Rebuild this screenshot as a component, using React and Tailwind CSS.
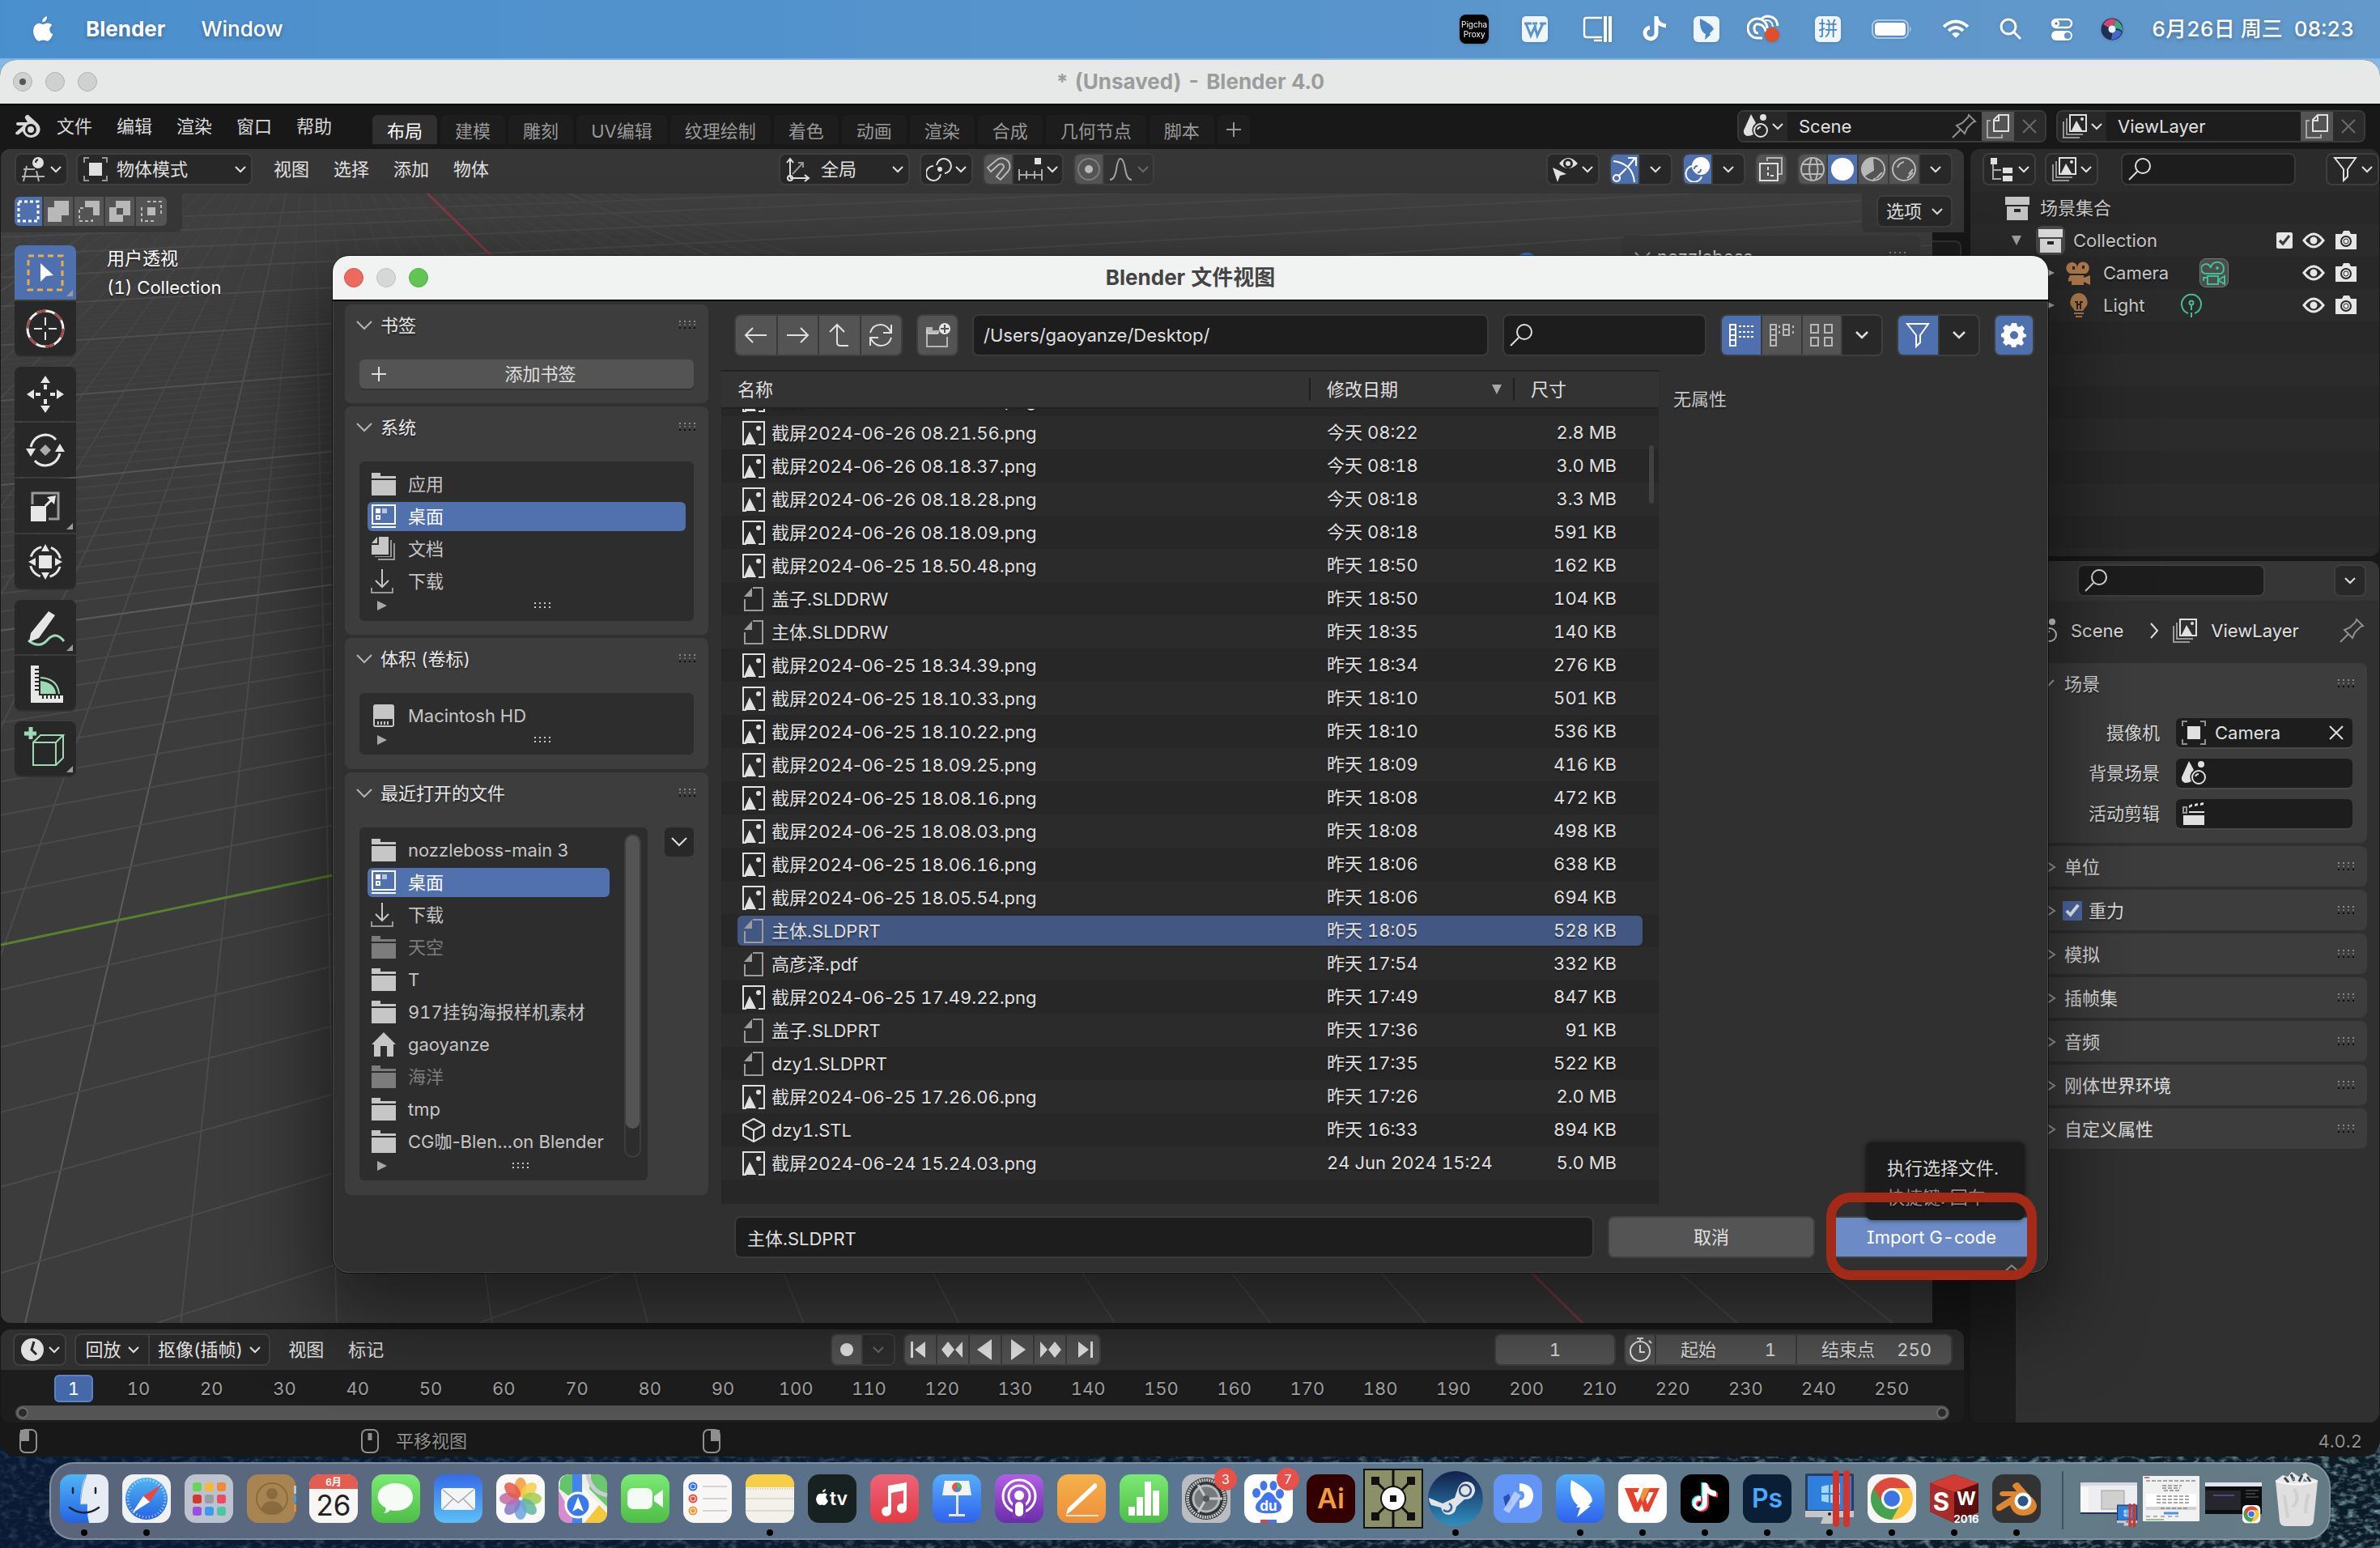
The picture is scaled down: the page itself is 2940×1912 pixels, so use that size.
import React from "react";

/* ---------- icon helpers ---------- */
const Ic = ({ c = "size-8 shrink-0", vb = "0 0 32 32", w = 2, children }) => (
  <svg className={c} viewBox={vb} fill="none" stroke="currentColor" strokeWidth={w} aria-hidden="true">{children}</svg>
);
const Chev = ({ c = "w-[14px] h-[10px] shrink-0" }) => (
  <Ic c={c} vb="0 0 14 10"><path d="M1 2l6 6 6-6" /></Ic>
);
const BigChev = () => <Ic c="w-5 h-3 shrink-0 text-[#b4b4b4]" vb="0 0 20 12"><path d="M1 1l9 9 9-9" /></Ic>;
const RightChev = () => <Ic c="w-3 h-5 shrink-0 text-[#a8a8a8]" vb="0 0 12 20"><path d="M1 4l9 6-9 6" /></Ic>;
const Grip = () => (
  <svg className="w-[22px] h-3 shrink-0" viewBox="0 0 22 12" aria-hidden="true">
    {[0, 6, 12, 18].map((x) => [0, 4, 8].map((y) => <rect key={x + "-" + y} x={x} y={y} width="2" height="2" fill={y === 0 ? "#8a8a8a" : y === 4 ? "#6f6f6f" : "#0c0c0c"} />))}
  </svg>
);
const ListGrip = () => (
  <svg className="w-[22px] h-2" viewBox="0 0 22 8" aria-hidden="true">
    {[0, 6, 12, 18].map((x) => [0, 5].map((y) => <rect key={x + "-" + y} x={x} y={y} width="2" height="2" fill="#c8c8c8" />))}
  </svg>
);
const Tri = ({ c = "w-3 h-3 text-[#a8a8a8]" }) => <Ic c={c} vb="0 0 12 12" w={0}><path d="M0 0l12 6-12 6z" fill="currentColor" /></Ic>;
const TriDown = ({ c = "w-3 h-3 shrink-0 text-[#a8a8a8]" }) => <Ic c={c} vb="0 0 12 12" w={0}><path d="M0 0h12l-6 12z" fill="currentColor" /></Ic>;
const Search = () => <Ic c="size-8 shrink-0 text-[#e0e0e0]"><circle cx="19" cy="12" r="9" /><path d="M12 19L2 29" /></Ic>;
const Close = () => <Ic c="size-6 shrink-0" vb="0 0 24 24"><path d="M4 4l16 16M20 4L4 20" /></Ic>;
const Folder = () => <Ic w={0}><path d="M1 2h11v4h19v3H1zM1 11h30v19H1z" fill="currentColor" /></Ic>;
const Desktop = () => <Ic><rect x="2" y="2" width="28" height="23" /><rect x="6" y="6" width="6" height="6" fill="currentColor" stroke="none" /><rect x="14" y="6" width="6" height="6" fill="currentColor" stroke="none" opacity=".6" /><rect x="7" y="15" width="4" height="4" /><path d="M1 29h30" /></Ic>;
const Docs = () => <Ic w={0}><path d="M10 1h12v22H1V11h9z" fill="currentColor" /><path d="M1 9l7-8v8z" fill="currentColor" /><path d="M24 5h2v21H5v-1h19zM28 9h2v21H9v-2h19z" fill="currentColor" opacity=".7" /></Ic>;
const Download = () => <Ic><path d="M14 1v22M6 15l8 8 8-8" /><path d="M1 24v6h26v-6" opacity=".7" /></Ic>;
const Home = () => <Ic w={0}><path d="M16 1l15 15h-3v15h-8V18h-8v13H4V16H1z" fill="currentColor" /></Ic>;
const Disk = () => <Ic w={0}><path d="M6 2h20q3 0 3 3v22q0 3-3 3H6q-3 0-3-3V5q0-3 3-3z" fill="currentColor" /><path d="M5 20h22v8H5z" fill="#2d2d2d" /><path d="M8 23h2v4H8zM12 23h2v4h-2zM16 23h2v4h-2zM20 23h2v4h-2z" fill="currentColor" /></Ic>;
const Picture = () => <Ic><path d="M22 30h7V2H3v28h4" /><path d="M4 30l7-16 8 16z" fill="currentColor" stroke="none" /><circle cx="22" cy="10" r="3" fill="currentColor" stroke="none" /></Ic>;
const FileIc = () => <Ic c="size-8 shrink-0 text-[#9c9c9c]"><path d="M15 2h12v28H5V16" /><path d="M4 13L14 2v11z" fill="currentColor" stroke="none" /></Ic>;
const Cube = () => <Ic><path d="M16 2l13 7v14l-13 7-13-7V9zM3 9l13 7 13-7M16 16v14" /></Ic>;
const SceneIc = () => <Ic><path d="M10 1l6 11q-6 5-4 12l1 2q-3 2-8 2-5-2-4-7z" fill="currentColor" stroke="none" /><circle cx="25" cy="5" r="4" fill="currentColor" stroke="none" /><circle cx="22" cy="21" r="8" /><path d="M18 20q1-3 4-3" /></Ic>;
const LayerIc = () => <Ic><rect x="10" y="2" width="20" height="20" /><path d="M12 21l6-12 7 12z" fill="currentColor" stroke="none" /><circle cx="25" cy="7" r="2" fill="currentColor" stroke="none" /><path d="M6 6v20h20M2 10v20h20" opacity=".6" /></Ic>;
const CopyIc = () => <Ic><path d="M11 22h18V2H17l-6 6zM17 2v7h-6" /><path d="M7 9H3v21h18v-4" opacity=".6" /></Ic>;
const Pin = () => <Ic c="size-8 shrink-0 text-[#909090]"><path d="M2 30l10-10M7 15l10 10 3-7 7-7 3-1-8-8-1 3-7 7z" /></Ic>;
const ObjIc = () => <Ic><rect x="8" y="8" width="16" height="16" fill="currentColor" stroke="none" /><path d="M2 8V2h6M24 2h6v6M30 24v6h-6M8 30H2v-6" opacity=".6" /></Ic>;
const FilterIc = () => <Ic><path d="M3 2h26L19 16v9l-5 5V16z" /></Ic>;
const Box = () => <Ic w={0}><path d="M1 2h30v10H1zM3 14h26v17H3z" fill="currentColor" /><rect x="12" y="17" width="8" height="4" fill="#282828" /></Ic>;
const Eye = () => <Ic c="w-7 h-6 shrink-0 text-[#e6e6e6]" vb="0 0 28 24" w={3}><path d="M2 12Q8 4 14 4t12 8q-6 8-12 8T2 12z" /><circle cx="14" cy="12" r="3" fill="currentColor" /></Ic>;
const Photo = () => <Ic c="w-7 h-6 shrink-0 text-[#e6e6e6]" vb="0 0 28 24" w={0}><path d="M1 4h8l2-4h7l2 4h7v19H1z" fill="currentColor" /><circle cx="14" cy="13" r="6" fill="none" stroke="#282828" strokeWidth="2" /><circle cx="14" cy="13" r="3" fill="none" stroke="#282828" strokeWidth="1" /></Ic>;

/* ---------- small controls ---------- */
const IconDrop = ({ label, children }) => (
  <button aria-label={label} className="flex h-10 items-center gap-1 rounded-lg border-2 border-[#3f3f3f] bg-[#282828] px-1.5 text-[#e0e0e0]">{children}<Chev /></button>
);
const DropSelect = ({ label, value, icon, width }) => (
  <label className={width}>
    {icon}
    <select aria-label={label} defaultValue={value} className="min-w-0 flex-1 appearance-none bg-transparent outline-none"><option>{value}</option></select>
    <Chev />
  </label>
);
const Lights = ({ active }) => (
  <div className="flex gap-4">
    {(active ? ["bg-[#ec6a5e] border-[#d25648]", "bg-[#d6d8d7] border-[#bfc1c0]", "bg-[#61c554] border-[#4fae43]"] : ["bg-[#cfd1d0] border-[#b0b2b1]", "bg-[#cfd1d0] border-[#b0b2b1]", "bg-[#cfd1d0] border-[#b0b2b1]"]).map((k, i) => (
      <button key={i} aria-label={["关闭", "最小化", "缩放"][i]} className={"flex size-6 items-center justify-center rounded-full border " + k}>
        {!active && i === 0 && <span className="size-2 rounded-full bg-[#555]" />}
      </button>
    ))}
  </div>
);

/* ---------- macOS menu bar ---------- */
const Apple = ({ c }) => <svg className={c} viewBox="0 0 26 32" fill="currentColor" aria-hidden="true"><path d="M18 0q.4 3-1.4 5.200T12.300 7.400Q12 4.600 13.800 2.600 15.600.6 18 0zM24.500 11q-3.300 2-3.200 5.500.1 4 4 5.700-1 3-2.800 5.600Q20.700 30.600 18.800 30.700q-1.300 0-2.700-.7-1.400-.6-2.700-.6-1.400 0-2.800.6-1.400.700-2.500.7-2 0-4.100-3Q1 23.500 1 18.600q0-4.700 2.300-7.400Q5.400 8.700 8.300 8.700q1.400 0 3 .7 1.600.6 2.200.6.700 0 2.300-.7 1.700-.8 3.400-.7 3.600.2 5.300 2.400z" /></svg>;

const menuIcons = [
  ["w-[74px]", <div key="p" className="flex size-9 flex-col items-center justify-center rounded-lg bg-black text-[10px] leading-3 text-white"><span>Pigcha</span><span>Proxy</span></div>],
  ["w-[76px]", <svg key="w" className="size-8" viewBox="0 0 32 32"><rect width="32" height="32" rx="5" fill="#eef5fb" /><path d="M3 9h9M5 9l6 15 6-13M16 13l3 11 7-15M13 9h6M22 9h8" stroke="#5a94cc" strokeWidth="3" fill="none" /></svg>],
  ["w-[78px]", <Ic key="s" c="size-9" vb="0 0 36 36"><path d="M24 4H5Q2 4 2 7v18q0 3 3 3h19M14 32h10" strokeWidth="2.500" /><path d="M28 2v32M34 2v32" strokeWidth="4" /></Ic>],
  ["w-16", <Ic key="t" c="w-8 h-8" vb="0 0 32 32" w={5}><path d="M18 0v21a7 7 0 1 1-8-7M18 2q2 9 12 10" /></Ic>],
  ["w-16", <svg key="b" className="size-8" viewBox="0 0 32 32"><rect width="32" height="32" rx="6" fill="#eef5fb" /><path d="M8 3q15 7 17 13l-5 5 1 2-7 6 1-7-2-1q-6-5-5-18z" fill="#4a87c3" /></svg>],
  ["w-[76px]", <svg key="c" className="h-9 w-10" viewBox="0 0 40 36"><path d="M19 29h-6A12 12 0 1 1 25 17M14 23q-5 0-5-6t6-5 8 8l5 5M17 7q3-5 9-5 11 1 12 12" fill="none" stroke="#fff" strokeWidth="3" /><path d="M22 7q9-1 10 8" fill="none" stroke="#fff" strokeWidth="2" /><circle cx="31" cy="25" r="9" fill="#df4f28" /></svg>],
  ["w-[84px]", <div key="pin" className="flex size-8 items-center justify-center rounded-md bg-[#eef5fb] text-2xl leading-8 text-[#4a87c3]">拼</div>],
  ["w-[74px]", <svg key="bat" className="h-6 w-[50px]" viewBox="0 0 50 24"><rect x="1" y="1" width="44" height="22" rx="7" fill="none" stroke="#fff" strokeOpacity=".5" strokeWidth="2" /><rect x="4" y="4" width="38" height="16" rx="4" fill="#fff" /><path d="M47 8q3 4 0 8z" fill="#fff" opacity=".6" /></svg>],
  ["w-[84px]", <Ic key="wifi" c="h-6 w-[34px]" vb="0 0 34 24" w={4}><path d="M2 9Q17-4 32 9M8 14q9-8 18 0" /><path d="M12 18q5-4 10 0l-5 5z" fill="currentColor" stroke="none" /></Ic>],
  ["w-[52px]", <Ic key="se" c="size-7" vb="0 0 28 28" w={3}><circle cx="11" cy="11" r="9" /><path d="M18 18l8 8" /></Ic>],
  ["w-[74px]", <Ic key="cc" c="size-7" vb="0 0 28 28" w={2.5}><rect x="2" y="2" width="24" height="10" rx="5" /><circle cx="7" cy="7" r="3" /><rect x="1" y="16" width="26" height="12" rx="6" fill="currentColor" stroke="none" /><circle cx="21" cy="22" r="4" fill="#5d95cb" stroke="none" /></Ic>],
  ["w-[50px]", <svg key="siri" className="size-7" viewBox="0 0 28 28"><circle cx="14" cy="14" r="13.500" fill="#1f2f55" /><path d="M3 8Q10-2 20 3q-4 4-6 10Q8 12 3 8z" fill="#d0486b" /><path d="M20 3q8 6 7 14-5-5-12-4 1-6 5-10z" fill="#3fa586" /><path d="M26 18q-4 9-13 9 2-6 1-12 8-1 12 3z" fill="#4668c8" /><circle cx="14" cy="14" r="4.500" fill="#e6f6ff" /></svg>],
];
const MenuBar = () => (
  <header className="flex h-[72px] shrink-0 items-center bg-gradient-to-r from-[#4a8fcd] to-[#6399cb] pl-10 pr-8 text-[26px] leading-8 text-white">
    <Apple c="h-8 w-[26px] drop-shadow" />
    <button className="ml-10 font-bold [text-shadow:0_2px_5px_rgba(0,0,0,.3)]">Blender</button>
    <button className="ml-11 font-medium [text-shadow:0_2px_5px_rgba(0,0,0,.3)]">Window</button>
    <div className="ml-auto flex items-center">
      {menuIcons.map(([w, el], i) => <div key={i} className={"flex justify-center drop-shadow " + w}>{el}</div>)}
      <time className="ml-6 whitespace-nowrap font-medium tabular-nums [text-shadow:0_2px_5px_rgba(0,0,0,.3)]">6月26日 周三&nbsp; 08:23</time>
    </div>
  </header>
);

/* ---------- top bar ---------- */
const IdBlock = ({ icon, value, pin }) => (
  <div className="flex h-10 items-stretch overflow-hidden rounded-lg border-2 border-[#3a3a3a] text-[#e0e0e0]">
    <button aria-label={value + " 列表"} className="flex w-[60px] items-center justify-center gap-1 bg-[#282828]">{icon}<Chev /></button>
    <label className="flex w-60 items-center bg-[#1d1d1d] pl-[14px] pr-1.5"><input aria-label={value} defaultValue={value} className="w-0 flex-1 bg-transparent outline-none" />{pin && <Pin />}</label>
    <button aria-label="新建" className="flex w-10 items-center justify-center bg-[#545454]"><CopyIc /></button>
    <button aria-label="移除" className="flex w-[38px] items-center justify-center bg-[#2b2b2b] text-[#6a6a6a]"><Close /></button>
  </div>
);
const BlenderLogo = ({ c }) => (
  <svg className={c} viewBox="0 0 32 30" aria-hidden="true"><path d="M15 1q2-1 3 1l10 9q5 5 3 11-3 7-11 7-8-1-10-8l-5 4q-3 1-4-1 0-1 1-2l9-8H4q-2 0-2-2t2-2h12l-3-5q-1-2 2-4z" fill="currentColor" /><circle cx="20" cy="19" r="7" fill="#181818" /><circle cx="20" cy="19" r="4" fill="currentColor" /></svg>
);
const TopBar = () => (
  <div className="flex h-[54px] shrink-0 items-start bg-[#181818] pl-[18px] pr-[18px] text-[#d8d8d8]">
    <nav className="flex h-[52px] items-center gap-[30px]">
      <span className="-mr-2.5 flex"><BlenderLogo c="h-[30px] w-8" /></span>
      {["文件", "编辑", "渲染", "窗口", "帮助"].map((t) => <button key={t}>{t}</button>)}
    </nav>
    <div className="ml-[50px] mt-3 flex gap-1">
      {["布局", "建模", "雕刻", "UV编辑", "纹理绘制", "着色", "动画", "渲染", "合成", "几何节点", "脚本"].map((t, i) => (
        <button key={t + i} className={i === 0 ? "h-9 rounded-t-md bg-[#303030] px-[18px] pt-1 text-white" : "h-9 rounded-t-md bg-[#1d1d1d] px-[18px] pt-1 text-[#989898]"}>{t}</button>
      ))}
      <button aria-label="添加工作区" className="flex h-9 w-10 items-center justify-center rounded-t-md bg-[#1d1d1d] text-[#989898]"><Ic c="size-5" vb="0 0 20 20"><path d="M10 1v18M1 10h18" /></Ic></button>
    </div>
    <div className="ml-auto mt-1.5 flex gap-3">
      <IdBlock icon={<SceneIc />} value="Scene" pin />
      <IdBlock icon={<LayerIc />} value="ViewLayer" />
    </div>
  </div>
);

/* ---------- 3D viewport ---------- */
const Floor = () => {
  const a = [], b = [];
  for (let k = -60; k <= 14; k++) {
    const x = 1918 + 188 * k;
    const major = k % 10 === 0;
    if (k !== 0) a.push(<line key={k} x1="385" y1="100" x2={385 + (x - 385) * 1.1} y2="1750" stroke={major ? "#5c5c5c" : "#4b4b4b"} strokeWidth="2" />);
  }
  for (let k = -90; k <= 7; k++) {
    const x = -2195 + 398 * k;
    const major = k % 10 === 0;
    if (k !== 0) b.push(<line key={k} x1="4900" y1="100" x2={x} y2="1634" stroke={major ? "#5c5c5c" : "#4b4b4b"} strokeWidth="2" opacity={major ? 1 : Math.max(0.3, Math.min(1, 1 + k / 60))} />);
  }
  return (
    <svg className="absolute inset-0 h-full w-full" viewBox="0 184 2426 1450" preserveAspectRatio="xMinYMin slice" aria-hidden="true">
      <defs>
        <linearGradient id="fade" x1="0" y1="184" x2="0" y2="760" gradientUnits="userSpaceOnUse"><stop offset="0" stopColor="#3f3f3f" stopOpacity=".9" /><stop offset=".25" stopColor="#3e3e3e" stopOpacity=".55" /><stop offset="1" stopColor="#3c3c3c" stopOpacity="0" /></linearGradient>
      </defs>
      {a}{b}
      <rect x="0" y="184" width="2426" height="576" fill="url(#fade)" />
      <line x1="385" y1="100" x2="1954" y2="1634" stroke="#7f3a43" strokeWidth="3" />
      <line x1="0" y1="1167" x2="1215" y2="912" stroke="#59802c" strokeWidth="3" />
      <circle cx="1885" cy="326" r="14" fill="#3f72c8" />
    </svg>
  );
};
const Seg = ({ on, dim, label, children, w = "w-[38px]" }) => (
  <button aria-label={label} className={"flex h-full items-center justify-center " + w + (on ? " bg-[#4f70af] text-white" : dim ? " bg-[#2e2e2e] text-[#6a6a6a]" : " bg-[#545454] text-[#b8b8b8]")}>{children}</button>
);
const group = "flex h-10 items-stretch divide-x-2 divide-[#3d3d3d] overflow-hidden rounded-lg border-2 border-[#3f3f3f] bg-[#282828] text-[#e0e0e0]";

const ViewHeader = () => (
  <div className="relative grid h-[55px] grid-cols-[1fr_auto_1fr] items-start bg-[#363636]/95 pl-[17px] pr-[14px] pt-[5px] text-[#e0e0e0]">
    <div className="flex h-10 items-center gap-2.5">
      <IconDrop label="编辑器类型"><Ic><circle cx="21" cy="8" r="7" fill="currentColor" stroke="none" /><path d="M18 8q0-3 3-4" stroke="#282828" /><path d="M7 12L3 31M19 18l3 13M3 16h14M1 25h28" opacity=".75" /></Ic></IconDrop>
      <DropSelect label="模式" value="物体模式" icon={<ObjIc />} width="flex h-10 w-[218px] items-center gap-2.5 rounded-lg border-2 border-[#3f3f3f] bg-[#282828] px-1.5" />
      <div className="ml-4 flex gap-[30px]">{["视图", "选择", "添加", "物体"].map((t) => <button key={t}>{t}</button>)}</div>
    </div>
    <div className="flex gap-3 pr-[42px]">
      <DropSelect label="变换坐标系" value="全局" icon={<Ic><path d="M6 26V3M2 8l4-5 4 5M6 27h22M24 23l5 4-5 4" /><circle cx="6" cy="27" r="3" /><path d="M9 22L22 8M22 14V8h-6" opacity=".6" /></Ic>} width="flex h-10 w-[162px] items-center gap-3 rounded-lg border-2 border-[#3f3f3f] bg-[#282828] px-1.5" />
      <IconDrop label="轴心点"><Ic><circle cx="17" cy="16" r="3" fill="currentColor" stroke="none" /><path d="M13 11a9 9 0 1 1 10 10M18 22A9 9 0 1 1 9 12" /></Ic></IconDrop>
      <div className={group}>
        <Seg label="吸附" w="w-9"><Ic><path d="M3 14L15 4a10 10 0 0 1 13 15L19 29l-5-4 9-11q0-6-6-4L7 19z" /></Ic></Seg>
        <button aria-label="吸附选项" className="flex w-[60px] items-center justify-center gap-1"><Ic><rect x="21" y="2" width="8" height="8" fill="currentColor" stroke="none" /><path d="M2 16v14M30 16v14M2 23h28M11 18v10M21 18v10" opacity=".7" /></Ic><Chev /></button>
      </div>
      <div className={group}>
        <Seg label="衰减编辑" w="w-9"><Ic><circle cx="16" cy="16" r="13" opacity=".4" /><circle cx="16" cy="16" r="5" fill="currentColor" stroke="none" /></Ic></Seg>
        <button aria-label="衰减" className="flex w-[60px] items-center justify-center gap-1 bg-[#323232] text-[#6a6a6a]"><Ic c="size-8 shrink-0 text-[#a0a0a0]"><path d="M2 29q6 0 8-13t5-13q4 0 6 13t8 13" /></Ic><Chev /></button>
      </div>
    </div>
    <div className="flex justify-end gap-3">
      <IconDrop label="可见性"><Ic><path fillRule="evenodd" d="M8 9Q19-5 31 9 19 21 8 9zM19 3a6 6 0 1 0 0 12 6 6 0 0 0 0-12z" fill="currentColor" stroke="none" /><circle cx="19" cy="9" r="3" fill="currentColor" stroke="none" /><path d="M0 14l17 8-8 2-3 8z" fill="currentColor" stroke="none" /></Ic></IconDrop>
      <div className={group}>
        <Seg on label="Gizmo" w="w-9"><Ic><path d="M2 6q24 3 26 26M8 25l10-10M20 13l9-11M20 2h10v10" /><circle cx="6" cy="27" r="4" /></Ic></Seg>
        <button aria-label="Gizmo 选项" className="flex w-[38px] items-center justify-center"><Chev /></button>
      </div>
      <div className={group}>
        <Seg on label="叠加层" w="w-9"><Ic><circle cx="20" cy="12" r="11" fill="currentColor" stroke="none" /><path d="M9 12a10 10 0 1 0 12 13" /><path d="M12 16q0-4 4-4M16 20q4 0 4-4" stroke="#4f70af" /></Ic></Seg>
        <button aria-label="叠加层选项" className="flex w-[38px] items-center justify-center"><Chev /></button>
      </div>
      <div className={group}><Seg label="透视模式" w="w-9"><Ic c="size-8 shrink-0 text-[#e0e0e0]"><path d="M11 6V2h18v20h-4" opacity=".7" /><rect x="2" y="9" width="22" height="21" /><path d="M12 13v11h10" strokeDasharray="4 3" /></Ic></Seg></div>
      <div className={group}>
        <Seg label="线框" w="w-9"><Ic><circle cx="16" cy="16" r="14" /><path d="M15 2q-6 14 0 28M3 10h26M3 22h26M20 3q5 13 0 26" /></Ic></Seg>
        <Seg on label="实体"><Ic><circle cx="16" cy="16" r="14" fill="currentColor" stroke="none" /></Ic></Seg>
        <Seg label="材质预览"><Ic><circle cx="16" cy="16" r="14" /><path d="M15 2a14 14 0 0 0-10 22l11-7z" fill="currentColor" /><path d="M20 27l7-7M16 29l3-2" /></Ic></Seg>
        <Seg label="渲染"><Ic><circle cx="16" cy="16" r="14" /><path d="M8 14q2-6 8-7M20 27l7-7M22 22l5-6" /></Ic></Seg>
        <button aria-label="着色选项" className="flex w-[38px] items-center justify-center"><Chev /></button>
      </div>
    </div>
  </div>
);

const toolGroups = [
  [
    ["框选", <Ic key="a" c="size-14" vb="0 0 56 56" w={0}><rect x="7" y="7" width="42" height="42" fill="none" stroke="#e8ae45" strokeWidth="3" strokeDasharray="7 5" /><path d="M22 16l16 15-9 1-7 7z" fill="#fff" /></Ic>, true],
    ["游标", <Ic key="b" c="size-14" vb="0 0 56 56"><circle cx="28" cy="28" r="22" stroke="#f0f0f0" strokeWidth="3" /><circle cx="28" cy="28" r="22" stroke="#a04a4a" strokeWidth="3" strokeDasharray="11.500 11.500" /><path d="M28 14v10M28 32v10M14 28h10M32 28h10" /></Ic>],
  ],
  [
    ["移动", <Ic key="c" c="size-14" vb="0 0 56 56" w={4}><path d="M28 16v6M28 34v6M16 28h6M34 28h6" /><path d="M28 5l6 9H22zM28 51l6-9H22zM5 28l9-6v12zM51 28l-9-6v12z" fill="currentColor" stroke="none" /></Ic>],
    ["旋转", <Ic key="d" c="size-14" vb="0 0 56 56" w={3}><path d="M10 24q4-14 18-15 8 0 13 6M46 32q-4 14-18 15-8 0-13-6" /><path d="M10 36l-6-10h12zM46 20l6 10H40z" fill="currentColor" stroke="none" /><path d="M28 21l7 7-7 7-7-7z" fill="#aaa" stroke="none" /></Ic>],
    ["缩放", <Ic key="e" c="size-14" vb="0 0 56 56" w={3}><path d="M12 26V12h32v32H32" opacity=".6" /><rect x="10" y="28" width="19" height="19" fill="currentColor" stroke="none" /><path d="M28 28l8-8" /><path d="M41 15l-2 11-9-9z" fill="currentColor" stroke="none" /></Ic>, false, true],
    ["变换", <Ic key="f" c="size-14" vb="0 0 56 56" w={3}><circle cx="28" cy="28" r="19" strokeDasharray="18 12" strokeDashoffset="-6" /><rect x="20" y="20" width="16" height="16" fill="currentColor" stroke="none" /><path d="M28 6l5 9H23zM28 50l5-9H23zM7 28l9-5v10zM49 28l-9-5v10z" fill="currentColor" stroke="none" /></Ic>],
  ],
  [
    ["标注", <Ic key="g" c="size-14" vb="0 0 56 56" w={3}><path d="M7 44q14 11 24-1 10-11 20 2" stroke="#9fd8b4" /><path d="M32 8l8 5-20 28-12 5 2-11z" fill="currentColor" stroke="none" /></Ic>, false, true],
    ["测量", <Ic key="h" c="size-14" vb="0 0 56 56" w={0}><path d="M10 6h10v37h30v9H10z" fill="currentColor" /><path d="M22 25q18 2 19 16H22z" fill="#9fd8b4" /><path d="M22 21q21 1 23 20" fill="none" stroke="#9fd8b4" strokeWidth="2" /><path d="M15 11h5M15 16h5M15 21h5M15 26h5M15 31h5M15 36h5M25 43v4M30 43v4M35 43v4M40 43v4M45 43v4" stroke="#282828" strokeWidth="2" /></Ic>],
  ],
  [["添加立方体", <Ic key="i" c="size-14" vb="0 0 56 56"><g stroke="#9fd8b4"><path d="M13 20h28v28H13zM13 20l9-9h28l-9 9M50 11v28l-9 9" /><path d="M10 1v15M2 9h15" strokeWidth="5" /></g></Ic>, false, true]],
];
const ToolShelf = () => (
  <div className="flex flex-col gap-[14px] pl-[17px] pt-4">
    {toolGroups.map((g, i) => (
      <div key={i} className="flex flex-col gap-0.5 overflow-hidden rounded-lg shadow-[0_2px_0_#333]">
        {g.map(([t, ic, on, more]) => (
          <button key={t} aria-label={t} className={on ? "relative flex h-[67px] w-[76px] items-center justify-center bg-[#4f70af] text-[#e6e6e6]" : "relative flex h-[67px] w-[76px] items-center justify-center bg-[#282828] text-[#e6e6e6]"}>
            {ic}{(on || more) && <span className="absolute bottom-1 right-1 size-2 bg-[#9a9a9a] [clip-path:polygon(100%_0,100%_100%,0_100%)]" />}
          </button>
        ))}
      </div>
    ))}
  </div>
);
const Viewport = () => (
  <section className="relative flex flex-1 flex-col overflow-hidden rounded-xl bg-[#3c3c3c]">
    <Floor />
    <ViewHeader />
    <div className="relative flex h-12 items-start justify-between">
      <div className="flex h-12 w-56 items-start rounded-br-lg bg-[#363636]/95 pl-[17px] pt-1">
        <div className="flex h-9 divide-x-2 divide-[#3a3a3a] overflow-hidden rounded-md">
          <Seg on label="新建选择" w="w-9"><Ic c="size-7" vb="0 0 28 28"><rect x="2" y="2" width="24" height="24" strokeDasharray="4 3" strokeWidth="3" /></Ic></Seg>
          <Seg label="扩展"><Ic c="size-7" vb="0 0 28 28" w={0}><path d="M9 1h18v18h-9v8H1V9h8z" fill="currentColor" /></Ic></Seg>
          <Seg label="减去"><Ic c="size-7" vb="0 0 28 28"><path d="M9 1h18v18h-8V9H9z" fill="currentColor" stroke="none" /><path d="M7 10H2v16h16v-5" strokeDasharray="4 3" /></Ic></Seg>
          <Seg label="反转"><Ic c="size-7" vb="0 0 28 28" w={0}><path fillRule="evenodd" d="M9 1h18v18h-9v8H1V9h8zM10 10v8h8v-8z" fill="currentColor" /></Ic></Seg>
          <Seg label="相交"><Ic c="size-7" vb="0 0 28 28"><rect x="9" y="9" width="10" height="10" fill="currentColor" stroke="none" /><path d="M9 2h17v17M2 9v17h17" strokeDasharray="4 3" /></Ic></Seg>
        </div>
      </div>
      <div className="flex h-12 items-start rounded-bl-lg bg-[#363636]/95 pl-[18px] pr-[14px] pt-0.5">
        <button className="flex h-10 items-center gap-3 rounded-lg border-2 border-[#3f3f3f] bg-[#282828] px-2.5 text-[#e0e0e0]">选项<Chev /></button>
      </div>
    </div>
    <div className="relative flex flex-1">
      <ToolShelf />
      <div className="pl-[38px] pt-[14px] leading-9 text-white">
        <p>用户透视</p>
        <p>(1) Collection</p>
      </div>
      <div className="ml-auto mr-[15px] mt-1 flex h-16 w-[369px] items-center justify-between self-start rounded-lg bg-[#3a3a3a] px-4 pb-3 text-[#e0e0e0]">
        <span className="flex items-center gap-2"><BigChev />nozzleboss</span><Grip />
      </div>
      <div className="w-[39px] bg-[#181818] pt-2.5"><div className="h-40 w-9 rounded-r-lg border-2 border-l-0 border-[#333] bg-[#1d1d1d]" /></div>
    </div>
  </section>
);

/* ---------- timeline ---------- */
const playPaths = [
  ["跳转到开头", "M4 6h3v20H4zM22 6v20L9 16z"],
  ["上一关键帧", "M10 6l8 10-8 10L2 16zM28 6v20l-9-10z"],
  ["倒放", "M24 3v26L6 16z"],
  ["播放", "M8 3v26l18-13z"],
  ["下一关键帧", "M22 6l8 10-8 10-8-10zM4 6v20l9-10z"],
  ["跳转到结尾", "M25 6h3v20h-3zM10 6v20l13-10z"],
];
const Timeline = () => (
  <section className="flex h-[115px] flex-col overflow-hidden rounded-xl bg-[#1d1d1d] text-[#e0e0e0]">
    <div className="grid h-[50px] grid-cols-[1fr_auto_1fr] items-center bg-[#303030] pl-[15px] pr-[14px]">
      <div className="flex items-center gap-2.5">
        <IconDrop label="编辑器类型"><Ic><circle cx="16" cy="16" r="14" fill="currentColor" stroke="none" /><path d="M18 6l-3 10 6 6" stroke="#282828" strokeWidth="3" /></Ic></IconDrop>
        <div className={group}>
          <button className="flex w-[91px] items-center justify-center gap-2 whitespace-nowrap">回放<Chev /></button>
          <button className="flex items-center justify-center gap-2 whitespace-nowrap px-2.5">抠像(插帧)<Chev /></button>
        </div>
        <div className="ml-3 flex gap-[30px]"><button>视图</button><button>标记</button></div>
      </div>
      <div className="flex gap-2.5 pr-[42px]">
        <div className={group}>
          <Seg label="自动插帧"><Ic w={0}><circle cx="16" cy="16" r="8" fill="#e8e8e8" /></Ic></Seg>
          <Seg dim label="插帧选项"><Chev /></Seg>
        </div>
        <div className={group}>
          {playPaths.map(([t, d]) => <Seg key={t} label={t} w="w-10"><Ic w={0} c="size-8 shrink-0 text-[#e8e8e8]"><path d={d} fill="currentColor" /></Ic></Seg>)}
        </div>
      </div>
      <div className="flex justify-end gap-2.5">
        <input aria-label="当前帧" defaultValue="1" className="h-10 w-[150px] rounded-lg border-2 border-[#3f3f3f] bg-[#545454] text-center outline-none" />
        <div className={group}>
          <Seg label="使用预览范围"><Ic c="size-8 shrink-0 text-[#e8e8e8]"><circle cx="16" cy="18" r="12" /><path d="M16 10v9h6M12 2h8M16 2v4M27 5l3 3" /></Ic></Seg>
          <label className="flex w-[174px] items-center justify-between bg-[#545454] pl-[30px] pr-6">起始<input aria-label="起始" defaultValue="1" className="w-12 bg-transparent text-right outline-none" /></label>
          <label className="flex w-[190px] items-center justify-between whitespace-nowrap bg-[#545454] pl-[30px] pr-6">结束点<input aria-label="结束点" defaultValue="250" className="w-14 bg-transparent text-right outline-none" /></label>
        </div>
      </div>
    </div>
    <div className="flex h-11 items-center pr-11 pt-0.5 text-[#a0a0a0]">
      <div className="w-[125px] shrink-0 pl-[66px]"><button className="h-[34px] w-12 rounded-md border-2 border-[#5d83c6] bg-[#4569a8] leading-7 text-white">1</button></div>
      {Array.from({ length: 25 }, (_, i) => <span key={i} className="flex-1 text-center">{(i + 1) * 10}</span>)}
    </div>
    <div className="mx-[18px] flex h-[18px] items-center justify-between rounded-full border-2 border-[#545454] bg-[#545454]">
      <span className="size-3.5 rounded-full border-2 border-[#6a6a6a] bg-[#2b2b2b]" /><span className="size-3.5 rounded-full border-2 border-[#6a6a6a] bg-[#2b2b2b]" />
    </div>
  </section>
);

/* ---------- outliner and properties ---------- */
const TreeRow = ({ pad, icon, label, extra, check, arrow }) => (
  <div className="flex h-10 items-center pr-[27px] text-[#c8c8c8]">
    <div className={pad}>{arrow}{icon}<span>{label}</span>{extra}</div>
    <div className="ml-auto flex items-center gap-3">
      {check && <input type="checkbox" aria-label={label + " 启用"} defaultChecked className="size-5 accent-[#e6e6e6]" />}
      {label !== "场景集合" && <><button aria-label={label + " 可见"}><Eye /></button><button aria-label={label + " 渲染"}><Photo /></button></>}
    </div>
  </div>
);
const Outliner = () => (
  <section className="flex h-[503px] shrink-0 flex-col overflow-hidden rounded-xl bg-[#282828]">
    <div className="flex h-[53px] shrink-0 items-start bg-[#2b2b2b] pl-[15px] pt-[5px] text-[#e0e0e0]">
      <IconDrop label="编辑器类型"><Ic><path d="M2 2h8v8H2zM17 14h12v7H17zM17 24h12v7H17z" fill="currentColor" stroke="none" /><path d="M5 10v18h10M5 17h10" opacity=".7" /></Ic></IconDrop>
      <span className="w-3" /><IconDrop label="显示模式"><LayerIc /></IconDrop>
      <label className="ml-7 flex h-10 w-[230px] items-center rounded-lg border-2 border-[#3a3a3a] bg-[#1d1d1d] px-1.5"><Search /><input aria-label="搜索大纲" className="w-0 flex-1 bg-transparent outline-none" /></label>
      <span className="w-10" /><IconDrop label="过滤器"><FilterIc /></IconDrop>
    </div>
    <div className="flex-1 bg-[repeating-linear-gradient(#282828_0px,#282828_40px,#2b2b2b_40px,#2b2b2b_80px)]">
      <TreeRow pad="flex items-center gap-3 pl-[42px]" icon={<Box />} label="场景集合" />
      <TreeRow pad="flex items-center gap-2.5 pl-[51px]" arrow={<TriDown c="mr-2 w-3 h-3 text-[#a8a8a8]" />} icon={<span className="flex size-9 items-center justify-center rounded-lg bg-[#4a4a4a] p-0.5 text-[#e0e0e0]"><Box /></span>} label="Collection" check />
      <TreeRow pad="flex items-center gap-[14px] pl-[92px]" arrow={<Tri c="w-3 h-3 text-[#a8a8a8]" />} icon={<span className="text-[#b27d4b]"><Ic w={0}><path fillRule="evenodd" d="M8 17a7 7 0 1 1 6-5 7.500 7.500 0 1 1 10 5H8zM8 8v4h3V8zM20 7v4h3V7zM5 19h17v3l8-3v12l-8-4v4H7v-5l-4 1v-4z" fill="currentColor" /></Ic></span>} label="Camera" extra={<span className="ml-6 flex size-9 items-center justify-center rounded-lg border border-[#777] bg-[#4d4d4d] text-[#3dc196]"><Ic><path d="M7 17a6 6 0 1 1 5-7 8 8 0 1 1 13 7zM8 20h13v10H8zM21 25l8-5v10zM8 22H3v4" /><circle cx="20" cy="10" r="1" /></Ic></span>} />
      <TreeRow pad="flex items-center gap-[14px] pl-[92px]" arrow={<Tri c="w-3 h-3 text-[#a8a8a8]" />} icon={<span className="text-[#b27d4b]"><Ic w={0}><path d="M16 1a11 11 0 0 1 7 19l-2 3H11l-2-3a11 11 0 0 1 7-19zM10 25h12v2H10zM12 29h8v2h-8z" fill="currentColor" /><path d="M11 12h3v3h4v-3h3M14 15v6M18 15v6" fill="none" stroke="#282828" strokeWidth="2" /></Ic></span>} label="Light" extra={<span className="ml-7 text-[#3dc196]"><Ic><path d="M12 26a12 12 0 1 1 8 0M16 16v6M16 25v6" /><circle cx="16" cy="13" r="2.500" /></Ic></span>} />
    </div>
  </section>
);
const Field = ({ label, icon, value }) => (
  <label className="flex items-center justify-end gap-5 text-[#d8d8d8]">{label}
    <span className="flex h-9 w-[218px] items-center gap-2.5 rounded-md bg-[#1d1d1d] pl-1.5 pr-2 text-[#e0e0e0] shadow-[0_2px_0_#484848]">{icon}<input defaultValue={value} className="w-0 flex-1 bg-transparent outline-none" />{value && <Close />}</span>
  </label>
);
const Properties = () => (
  <section className="flex flex-1 overflow-hidden rounded-xl bg-[#303030] text-[#e0e0e0]">
    <div className="w-14 shrink-0 bg-[#1d1d1d]" />
    <div className="flex flex-1 flex-col">
      <div className="flex h-[49px] shrink-0 items-center justify-between bg-[#363636] pb-0.5 pl-[76px] pr-4">
        <label className="flex h-10 w-[232px] items-center rounded-lg border-2 border-[#3f3f3f] bg-[#1d1d1d] px-1.5"><Search /><input aria-label="搜索属性" className="w-0 flex-1 bg-transparent outline-none" /></label>
        <button aria-label="选项" className="flex h-10 w-10 items-center justify-center rounded-lg border-2 border-[#3f3f3f] bg-[#282828]"><Chev /></button>
      </div>
      <div className="flex h-[77px] shrink-0 items-center pb-1 pl-5 pr-[18px]">
        <SceneIc /><span className="ml-4">Scene</span><span className="ml-8 mr-4 flex"><Ic c="w-3 h-5" vb="0 0 12 20"><path d="M2 1l8 9-8 9" /></Ic></span><LayerIc /><span className="ml-4">ViewLayer</span><span className="ml-auto flex"><Pin /></span>
      </div>
      <div className="flex flex-col gap-1 pl-2 pr-[15px]">
        <div className="h-[222px] rounded-lg bg-[#3d3d3d] pl-5 pr-[18px]">
          <div className="-mr-1 flex h-[52px] items-center gap-3"><BigChev /><span>场景</span><span className="ml-auto flex"><Grip /></span></div>
          <div className="mt-4 flex flex-col gap-[14px]">
            <Field label="摄像机" icon={<ObjIc />} value="Camera" />
            <Field label="背景场景" icon={<SceneIc />} />
            <Field label="活动剪辑" icon={<Ic w={0}><path d="M3 18h26v12H3zM10 13h19v2H10z" fill="currentColor" /><path d="M3 8h4v7H3z" fill="none" stroke="#999" strokeWidth="2" /><path d="M10 6l4-2v3l-4 2zM17 4l4-1v3l-4 1zM24 3l4-1v3l-4 1z" fill="currentColor" /></Ic>} />
          </div>
        </div>
        {["单位", "重力", "模拟", "插帧集", "音频", "刚体世界环境", "自定义属性"].map((t) => (
          <div key={t} className="flex h-[50px] items-center rounded-lg bg-[#3d3d3d] pl-[30px] pr-[14px] pt-0.5">
            <RightChev />
            {t === "重力" ? <label className="ml-2 flex items-center gap-2"><input type="checkbox" defaultChecked className="size-6 accent-[#4f70af]" />{t}</label> : <button className="ml-2.5">{t}</button>}
            <span className="ml-auto flex"><Grip /></span>
          </div>
        ))}
      </div>
    </div>
  </section>
);

const Mouse = ({ b }) => <Ic c="w-6 h-8 shrink-0 text-[#8f8f8f]" vb="0 0 24 32"><rect x="2" y="2" width="20" height="28" rx="6" />{b === 0 && <path d="M3 3h9v12H3z" fill="currentColor" />}{b === 1 && <path d="M12 6v9" strokeWidth="5" />}{b === 2 && <path d="M12 3h9v12h-9z" fill="currentColor" />}</Ic>;

/* ---------- file browser ---------- */
const Panel = ({ title, children, h }) => (
  <section className={"rounded-lg bg-[#3d3d3d] px-[18px] " + h}>
    <h2 className="-mx-1 flex h-[52px] items-center gap-2.5 text-[#e8e8e8]"><BigChev />{title}<span className="ml-auto flex"><Grip /></span></h2>
    {children}
  </section>
);
const SideItem = ({ icon, label, on, dim }) => (
  <button className={"flex h-9 w-full items-center gap-[14px] rounded-md pl-1 text-left whitespace-nowrap " + (on ? "bg-[#5070ae] text-white" : dim ? "text-[#7c7c7c]" : "text-[#c6c6c6]")}>{icon}{label}</button>
);
const ListFoot = () => <div className="flex h-6 items-center pl-3"><Tri /><span className="mx-auto flex pl-4"><ListGrip /></span></div>;

const files = [
  ["截屏2024-06-26 08.22.07.png", "今天 08:22", "2.9 MB"],
  ["截屏2024-06-26 08.21.56.png", "今天 08:22", "2.8 MB"],
  ["截屏2024-06-26 08.18.37.png", "今天 08:18", "3.0 MB"],
  ["截屏2024-06-26 08.18.28.png", "今天 08:18", "3.3 MB"],
  ["截屏2024-06-26 08.18.09.png", "今天 08:18", "591 KB"],
  ["截屏2024-06-25 18.50.48.png", "昨天 18:50", "162 KB"],
  ["盖子.SLDDRW", "昨天 18:50", "104 KB"],
  ["主体.SLDDRW", "昨天 18:35", "140 KB"],
  ["截屏2024-06-25 18.34.39.png", "昨天 18:34", "276 KB"],
  ["截屏2024-06-25 18.10.33.png", "昨天 18:10", "501 KB"],
  ["截屏2024-06-25 18.10.22.png", "昨天 18:10", "536 KB"],
  ["截屏2024-06-25 18.09.25.png", "昨天 18:09", "416 KB"],
  ["截屏2024-06-25 18.08.16.png", "昨天 18:08", "472 KB"],
  ["截屏2024-06-25 18.08.03.png", "昨天 18:08", "498 KB"],
  ["截屏2024-06-25 18.06.16.png", "昨天 18:06", "638 KB"],
  ["截屏2024-06-25 18.05.54.png", "昨天 18:06", "694 KB"],
  ["主体.SLDPRT", "昨天 18:05", "528 KB"],
  ["高彦泽.pdf", "昨天 17:54", "332 KB"],
  ["截屏2024-06-25 17.49.22.png", "昨天 17:49", "847 KB"],
  ["盖子.SLDPRT", "昨天 17:36", "91 KB"],
  ["dzy1.SLDPRT", "昨天 17:35", "522 KB"],
  ["截屏2024-06-25 17.26.06.png", "昨天 17:26", "2.0 MB"],
  ["dzy1.STL", "昨天 16:33", "894 KB"],
  ["截屏2024-06-24 15.24.03.png", "24 Jun 2024 15:24", "5.0 MB"],
];
const fileIcon = (n) => (n.endsWith("png") ? <Picture /> : n.endsWith("STL") ? <Cube /> : <FileIc />);
const FileName = ({ n }) => <span>{n.split(/(-)/).map((p, i) => (p === "-" ? <span key={i} className="normal-nums">-</span> : p))}</span>;
const bigGroup = "flex h-[52px] shrink-0 items-stretch divide-x-2 divide-[#3a3a3a] overflow-hidden rounded-lg border-2 border-[#3f3f3f] bg-[#282828] text-[#e0e0e0]";
const gray = "flex flex-1 items-center justify-center bg-[#545454] text-[#e0e0e0]";

const FileDialog = () => (
  <div className="absolute bottom-[340px] left-[411px] right-[410px] top-[316px] flex flex-col rounded-[20px] bg-[#303030] text-[22px] leading-8 text-[#e0e0e0] shadow-[0_40px_100px_16px_rgba(0,0,0,0.5),0_0_0_1px_rgba(0,0,0,0.6)] ring-1 ring-inset ring-[#4a4a4a]">
    <div className="relative flex h-14 shrink-0 items-center rounded-t-[20px] border-b-2 border-black bg-[#f1f3f2] pl-[14px]">
      <Lights active />
      <h1 className="absolute inset-x-0 text-center text-[26px] font-bold text-[#444]">Blender 文件视图</h1>
    </div>
    <div className="flex min-h-0 flex-1 [text-shadow:0_2px_2px_rgba(0,0,0,.45)]">
      <aside className="flex w-[480px] shrink-0 flex-col gap-1 pl-[15px] pr-4 pt-1">
        <Panel title="书签" h="h-[122px]">
          <button className="mt-4 flex h-9 w-full items-center rounded-md bg-[#545454] pl-[14px] shadow-[0_2px_0_#333]"><Ic c="size-5" vb="0 0 20 20"><path d="M10 1v18M1 10h18" /></Ic><span className="flex-1 text-center">添加书签</span></button>
        </Panel>
        <Panel title="系统" h="h-[282px]">
          <div className="mt-4 h-[197px] rounded-md bg-[#2d2d2d] px-2.5 pt-2.5">
            <div className="flex flex-col gap-1">
              <SideItem icon={<Folder />} label="应用" /><SideItem on icon={<Desktop />} label="桌面" /><SideItem icon={<Docs />} label="文档" /><SideItem icon={<Download />} label="下载" />
            </div>
            <ListFoot />
          </div>
        </Panel>
        <Panel title="体积 (卷标)" h="h-[162px]">
          <div className="mt-4 h-[76px] rounded-md bg-[#2d2d2d] px-2.5 pt-2.5"><SideItem icon={<Disk />} label="Macintosh HD" /><ListFoot /></div>
        </Panel>
        <Panel title="最近打开的文件" h="h-[522px]">
          <div className="mt-4 flex justify-between">
            <div className="flex h-[436px] w-[356px] gap-[18px] rounded-md bg-[#2d2d2d] pl-2.5 pr-2">
              <div className="w-[299px] pt-2.5">
                <div className="flex flex-col gap-1">
                  <SideItem icon={<Folder />} label={<span className="normal-nums">nozzleboss-main 3</span>} />
                  <SideItem on icon={<Desktop />} label="桌面" />
                  <SideItem icon={<Download />} label="下载" />
                  <SideItem dim icon={<Folder />} label="天空" />
                  <SideItem icon={<Folder />} label="T" />
                  <SideItem icon={<Folder />} label="917挂钩海报样机素材" />
                  <SideItem icon={<Home />} label="gaoyanze" />
                  <SideItem dim icon={<Folder />} label="海洋" />
                  <SideItem icon={<Folder />} label="tmp" />
                  <SideItem icon={<Folder />} label={<span className="normal-nums">CG咖-Blen...on Blender</span>} />
                </div>
                <div className="flex h-6 items-center pl-3"><Tri /><span className="ml-auto flex pr-[98px]"><ListGrip /></span></div>
              </div>
              <div className="mt-2 h-[400px] w-[21px] rounded-full border-2 border-[#3d3d3d]"><div className="h-[362px] rounded-full bg-[#545454]" /></div>
            </div>
            <button aria-label="更多" className="flex size-9 items-center justify-center rounded-md bg-[#282828]"><Ic c="w-5 h-3" vb="0 0 20 12"><path d="M1 1l9 9 9-9" /></Ic></button>
          </div>
        </Panel>
      </aside>
      <main className="flex min-w-0 flex-1 flex-col">
        <div className="flex h-[85px] shrink-0 gap-[17px] pl-4 pr-[17px] pt-4">
          <div className={bigGroup + " w-[208px]"}>
            <button aria-label="后退" className={gray}><Ic><path d="M3 16h26M12 7l-9 9 9 9" /></Ic></button>
            <button aria-label="前进" className={gray}><Ic><path d="M3 16h26M20 7l9 9-9 9" /></Ic></button>
            <button aria-label="上级" className={gray}><Ic><path d="M13 3v22q0 4 4 4h10M4 12l9-9 9 9" /></Ic></button>
            <button aria-label="刷新" className={gray}><Ic><path d="M3 13Q6 3 16 3q8 0 13 10M29 3v10H19M29 19q-3 10-13 10Q8 29 3 19M3 29V19h10" /></Ic></button>
          </div>
          <div className={bigGroup + " w-[52px]"}><button aria-label="新建文件夹" className={gray}><Ic><path d="M3 14h14M3 9v21h25V18" opacity=".7" /><path d="M2 6h8v4h8v4H2z" fill="currentColor" stroke="none" opacity=".7" /><circle cx="25" cy="8" r="7" fill="#e6e6e6" stroke="none" /><path d="M25 3v10M20 8h10" stroke="#545454" /></Ic></button></div>
          <input aria-label="路径" defaultValue="/Users/gaoyanze/Desktop/" className="h-[52px] min-w-0 flex-1 rounded-lg border-2 border-[#3a3a3a] bg-[#1d1d1d] px-3 outline-none" />
          <label className="flex h-[52px] w-[252px] items-center rounded-lg border-2 border-[#3a3a3a] bg-[#1d1d1d] px-1.5"><Search /><input aria-label="搜索文件" className="w-0 flex-1 bg-transparent outline-none" /></label>
          <div className={bigGroup + " w-[201px]"}>
            <button aria-label="垂直列表" className="flex flex-1 items-center justify-center bg-[#4f70af] text-white"><Ic><path d="M2 3h7v26H2zM2 9h7M2 16h7M2 22h7" /><path d="M13 5h18M13 12h18M13 18h18" strokeDasharray="3 2" /></Ic></button>
            <button aria-label="水平列表" className="flex flex-1 items-center justify-center bg-[#545454] text-[#b8b8b8]"><Ic><path d="M2 3h7v26H2zM2 9h7M2 16h7M2 22h7M18 3h7v13h-7zM18 9h7" /><path d="M13 4v14M30 4v10" strokeDasharray="3 4" /></Ic></button>
            <button aria-label="缩略图" className="flex flex-1 items-center justify-center bg-[#545454] text-[#b8b8b8]"><Ic><path d="M3 3h9v10H3zM20 3h9v10h-9zM3 19h9v10H3zM20 19h9v10h-9z" /></Ic></button>
            <button aria-label="显示设置" className="flex flex-1 items-center justify-center"><Ic c="w-[18px] h-3" vb="0 0 18 12"><path d="M2 2l7 7 7-7" strokeWidth="2.500" /></Ic></button>
          </div>
          <div className={bigGroup + " w-[103px]"}>
            <button aria-label="过滤" className="flex flex-1 items-center justify-center bg-[#4f70af] text-white"><FilterIc /></button>
            <button aria-label="过滤设置" className="flex flex-1 items-center justify-center"><Ic c="w-[18px] h-3" vb="0 0 18 12"><path d="M2 2l7 7 7-7" strokeWidth="2.500" /></Ic></button>
          </div>
          <button aria-label="切换侧栏" className="flex h-[52px] w-[50px] shrink-0 items-center justify-center rounded-lg border-2 border-[#3f3f3f] bg-[#4f70af] text-white"><Ic w={0}><path fillRule="evenodd" d="M13 1h6l1 4 2 1 4-2 3 4-2 3 1 3 3 1v3l-4 1-1 3 2 4-3 3-4-2-2 1-1 3h-5l-1-3-3-1-3 2-4-4 2-3-1-3-3-1v-4l3-1 1-3-2-3 4-4 4 2 2-1zM16 11a5 5 0 1 0 0 10 5 5 0 0 0 0-10z" fill="currentColor" /></Ic></button>
        </div>
        <div className="flex min-h-0 flex-1">
          <div className="flex min-w-0 flex-1 flex-col">
            <div className="relative flex h-12 shrink-0 items-center border-y-2 border-[#222] bg-[#333] pl-5 text-[#e0e0e0]">
              <button className="flex-1 text-left">名称</button>
              <button className="flex h-7 w-[252px] items-center justify-between border-l-2 border-[#1e1e1e] pl-5 pr-[14px]">修改日期<TriDown /></button>
              <button className="h-7 w-[180px] border-l-2 border-[#1e1e1e] pl-5 text-left leading-7">尺寸</button>
            </div>
            <div className="relative flex min-h-0 flex-1 flex-col justify-end overflow-hidden bg-[repeating-linear-gradient(#2b2b2b_0px,#2b2b2b_41px,#272727_41px,#272727_82px)] bg-[position:0_9px] pb-[30px] pl-5 pr-5">
              <table className="w-full shrink-0 table-fixed border-separate border-spacing-0">
                <colgroup><col /><col className="w-[240px]" /><col className="w-[150px]" /></colgroup>
                <tbody>
                  {files.map(([n, d, s], i) => {
                    const on = i === 16;
                    return (
                      <tr key={i} className="h-[41px] whitespace-nowrap">
                        <td className="p-0"><div className={"flex h-[37px] items-center gap-1.5 rounded-l-md pl-1 " + (on ? "bg-[#425781]" : "")}>{fileIcon(n)}<FileName n={n} /></div></td>
                        <td className="p-0"><div className={"h-[37px] leading-9 " + (on ? "bg-[#425781]" : "")}>{d}</div></td>
                        <td className="p-0 text-right"><div className={"h-[37px] rounded-r-md pr-8 leading-9 " + (on ? "bg-[#425781]" : "")}>{s}</div></td>
                      </tr>
                    );
                  })}
                </tbody>
              </table>
              <span className="absolute right-1.5 top-[45px] h-[72px] w-1.5 rounded-full bg-[#414141]" />
            </div>
          </div>
          <div className="w-[481px] shrink-0 pl-[18px] pt-5 text-[#c8c8c8]">无属性</div>
        </div>
        <div className="flex h-[85px] shrink-0 gap-[17px] pl-4 pr-[17px] pt-[15px]">
          <input aria-label="文件名" defaultValue="主体.SLDPRT" className="h-[52px] min-w-0 flex-1 rounded-lg border-2 border-[#3a3a3a] bg-[#1d1d1d] px-3.5 outline-none" />
          <button className="h-[52px] w-[256px] rounded-lg border-2 border-[#3f3f3f] bg-[#545454]">取消</button>
          <div className="relative">
            <button className="h-[52px] w-[254px] rounded-lg border-2 border-[#3f3f3f] bg-[#6b8ac6] text-white [font-feature-settings:'cv08']">Import G-code</button>
            <div role="tooltip" className="absolute bottom-[65px] right-3 h-24 w-[196px] rounded-lg bg-[#1c1c1c] pl-[26px] pt-[14px] leading-9 text-[#d8d8d8] shadow-[0_0_6px_rgba(0,0,0,.6)]"><p>执行选择文件.</p><p className="text-[#8c8c8c]">快捷键: 回车</p></div>
            <Ic c="absolute bottom-0 right-4 w-6 h-3 text-[#888]" vb="0 0 24 12"><path d="M3 11l9-8 9 8" /></Ic>
            <div className="absolute -inset-x-[3px] -top-[29px] h-[108px] rounded-[30px] border-[12px] border-[#a32a17]" />
          </div>
        </div>
      </main>
    </div>
  </div>
);

/* ---------- dock ---------- */
const R = ({ f }) => <rect width="60" height="60" rx="14" fill={f} />;
const T = ({ x = 30, y, s, f, children, w = 600 }) => <text x={x} y={y} fontSize={s} fill={f} fontWeight={w} textAnchor="middle" fontFamily="Inter, 'Noto Sans CJK SC', sans-serif">{children}</text>;
const Chrome = () => <><circle cx="30" cy="30" r="26" fill="#fbc43f" /><path d="M30 30L7.500 17A26 26 0 0 0 30 56l11-20z" fill="#46a250" /><path d="M7.500 17A26 26 0 0 1 52.500 17H30L19 36z" fill="#dd4b3e" /><circle cx="30" cy="30" r="13" fill="#fff" /><circle cx="30" cy="30" r="10" fill="#3c74e4" /></>;
const note = "M33 11v25a9 9 0 1 1-8-9v6a4 4 0 1 0 2 4V11zM33 11q1 9 11 10v6q-7 0-11-4z";
const Monitor = () => <><rect x="0" y="-1" width="60" height="54" rx="2" fill="#2c3c60" /><rect x="3" y="2" width="54" height="42" fill="#2f80dc" /><path d="M20 15l9-2v10h-9zM31 13l12-2v12H31zM20 25h9v10l-9-2zM31 25h12v12l-12-2z" fill="#9fd6ff" /><path d="M0 45h60v8H0zM22 53h16l3 8H19z" fill="#c6c6c9" /><circle cx="30" cy="49" r="2" fill="#222" /><rect x="34" y="-5" width="8" height="70" rx="4" fill="#d1342b" /><rect x="47" y="-5" width="8" height="70" rx="4" fill="#d1342b" /></>;
const apps = [
  ["Finder", <><R f="url(#gf)" /><path d="M33 0h13q14 0 14 14v32q0 14-14 14H36q-3-12-2-23h-9Q25 14 33 0z" fill="#e6ecf3" /><path d="M16 17v6M44 17v6M12 41q18 13 36 0" stroke="#1b2330" strokeWidth="2.500" fill="none" strokeLinecap="round" /><path d="M33 0q-7 18-8 37h9" fill="none" stroke="#7aa6cf" strokeWidth="1" /></>],
  ["Safari", <><R f="#f0f1f3" /><circle cx="30" cy="30" r="26" fill="url(#gf)" /><circle cx="30" cy="30" r="23" fill="none" stroke="#fff" strokeWidth="3" strokeDasharray="1 3" opacity=".7" /><path d="M48 13L34 34l-8-7z" fill="#f0453a" /><path d="M12 48l14-21 8 7z" fill="#fff" /></>],
  ["启动台", <><R f="#bcc3cf" />{["#6cd35a", "#f5b83d", "#ee8a3b", "#d6382e", "#9a9da3", "#ef4a62", "#9b4fe0", "#3b9af0", "#4cc6a5"].map((f, i) => <rect key={i} x={10 + (i % 3) * 15} y={10 + Math.floor(i / 3) * 15} width="11" height="11" rx="3" fill={f} />)}</>],
  ["通讯录", <><R f="#a78451" /><path d="M58 14h3v10h-3z" fill="#b8c9cf" /><path d="M58 26h3v9h-3z" fill="#4b9bd8" /><path d="M58 37h3v9h-3z" fill="#e98a33" /><circle cx="31" cy="30" r="19" fill="none" stroke="#8a6b3e" strokeWidth="2" /><circle cx="31" cy="24" r="7" fill="#8a6b3e" /><path d="M17 43q4-10 14-10t14 10q-14 12-28 0z" fill="#8a6b3e" /></>],
  ["日历", <><R f="#f7f6f4" /><path d="M0 18V14Q0 0 14 0h32q14 0 14 14v4z" fill="#e35d50" /><T y={14} s={12} f="#fff">6月</T><T y={51} s={35} f="#222" w={400}>26</T></>],
  ["信息", <><R f="url(#gg)" /><path d="M30 11c28 0 28 34 0 34-3 0-5 0-7-1-2 3-6 4-8 4 3-3 3-5 2-7-17-9-10-30 13-30z" fill="#f6fbf6" /></>],
  ["邮件", <><R f="url(#gm)" /><rect x="9" y="17" width="42" height="27" rx="4" fill="#f4f5f6" /><path d="M11 19l19 16 19-16M11 43l13-13M49 43L36 30" fill="none" stroke="#a5a9b0" strokeWidth="1.500" /></>],
  ["照片", <><R f="#f9f9f9" />{["#f29b38", "#f5d04a", "#a5cc4f", "#63b6a0", "#6ba6db", "#8a78c6", "#c16aa5", "#e75849"].map((f, i) => <ellipse key={i} cx="30" cy="16" rx="7.500" ry="12" fill={f} opacity=".85" transform={`rotate(${i * 45} 30 30)`} />)}</>],
  ["地图", <><R f="#eef0e6" /><path d="M0 14Q0 0 14 0l46 46q0 14-14 14H34z" fill="#f8f8f5" /><path d="M0 20l22 40h-8Q0 60 0 46z" fill="#d98bd0" /><path d="M2 7Q6 0 14 0h3v30L1 18z" fill="#62c56c" /><path d="M40 0h6q14 0 14 14v26L38 18z" fill="#6cc771" /><path d="M36 0q4 22 24 26" fill="none" stroke="#c9ccd2" strokeWidth="5" /><path d="M17 0h12v60H17z" fill="#4285f0" /><path d="M32 60l18-22 10 10q-1 12-14 12z" fill="#f4c83d" /><circle cx="24" cy="38" r="15" fill="#3b78e8" stroke="#fff" strokeWidth="3" /><path d="M24 28l7 18-7-4-7 4z" fill="#fff" /></>],
  ["FaceTime", <><R f="url(#gg)" /><rect x="8" y="17" width="31" height="26" rx="7" fill="#f4fbf4" /><path d="M41 27l11-8v22l-11-8z" fill="#f4fbf4" /></>],
  ["提醒事项", <><R f="#f8f7f5" />{["#2d6ff0", "#e5503f", "#f09a37"].map((f, i) => <g key={i}><circle cx="12" cy={15 + i * 15} r="4.500" fill="none" stroke={f} strokeWidth="2" /><circle cx="12" cy={15 + i * 15} r="2.500" fill={f} /><path d={`M24 ${15 + i * 15}h30`} stroke="#c9c9c9" strokeWidth="1.500" /></g>)}</>],
  ["备忘录", <><R f="#f3f1ea" /><path d="M0 16v-2Q0 0 14 0h32q14 0 14 14v2z" fill="#f7cf46" /><path d="M0 18h60" stroke="#bbb" strokeWidth="1.500" strokeDasharray="1 2" /><path d="M0 30h60M0 45h60" stroke="#d5d2ca" strokeWidth="1.500" /></>],
  ["TV", <><R f="#17211f" /><path d="M18 22q0-3 4-4 0 4-4 4zM18 24q3-2 6 1-4 3 1 8-3 6-6 5-1-1-4 0-4-1-5-7 1-9 8-7z" fill="#fff" /><T x={38} y={38} s={23} f="#fff">tv</T></>],
  ["音乐", <><R f="url(#gr)" /><path d="M22 14l23-4v31a6 6 0 1 1-4-5V20l-15 3v22a6 6 0 1 1-4-5z" fill="#fff" /></>],
  ["Keynote", <><R f="url(#gk)" /><path d="M12 26l3-18h30l3 18z" fill="#f3f3f3" /><circle cx="30" cy="16" r="6" fill="#e6573f" /><path d="M30 16V10a6 6 0 0 1 5 9z" fill="#48b36b" /><path d="M30 16l5 3a6 6 0 0 1-8 2z" fill="#3c8ee8" /><path d="M29 26h3v24h-3zM20 49h20v3H20z" fill="#e6e6e6" /></>],
  ["播客", <><R f="url(#gp)" /><circle cx="30" cy="27" r="20" fill="none" stroke="#fff" strokeWidth="3" /><circle cx="30" cy="27" r="13" fill="none" stroke="#fff" strokeWidth="3" /><path d="M22 36h16v18H22z" fill="#8338b9" /><circle cx="30" cy="26" r="6" fill="#fff" /><rect x="25" y="34" width="10" height="18" rx="5" fill="#fff" /></>],
  ["Pages", <><R f="url(#go)" /><path d="M46 11q4 0 3 5L19 44l-8 6 2-8z" fill="#fff" /><path d="M11 51h40" stroke="#fff" strokeWidth="2" opacity=".8" /></>],
  ["Numbers", <><R f="url(#gg)" /><path d="M11 40h8v11h-8zM21 28h8v23h-8zM31 9h8v42h-8zM41 20h8v31h-8z" fill="#fff" /></>],
  ["系统设置", <><R f="#b9bdc1" /><circle cx="30" cy="30" r="26" fill="#333537" /><circle cx="30" cy="30" r="23" fill="none" stroke="#bfc2c4" strokeWidth="4" strokeDasharray="2 1" /><circle cx="30" cy="30" r="16" fill="#777a7c" stroke="#b5b8ba" strokeWidth="3" /><path d="M30 30h20M30 30L20 13M30 30L20 47" stroke="#c6c9cb" strokeWidth="3" /><circle cx="30" cy="30" r="4" fill="#55585a" /></>, "3"],
  ["百度", <><R f="#fff" /><g fill="#4275ee"><ellipse cx="15" cy="23" rx="5" ry="6" /><ellipse cx="24" cy="14" rx="4.500" ry="6" /><ellipse cx="36" cy="14" rx="4.500" ry="6" /><ellipse cx="44" cy="24" rx="5" ry="6" /><path d="M30 22q5 0 9 8 8 6 7 12-2 7-16 6-14 1-16-6-1-6 7-12 4-8 9-8z" /></g><T y={45} s={17} f="#fff" w={700}>du</T><path d="M20 56h10v4H20z" fill="#c94a50" /><path d="M30 56h10v4H30z" fill="#4275ee" /></>, "7"],
  ["Illustrator", <><R f="#300" /><T y={42} s={34} f="#f29d38">Ai</T></>],
  ["工具", <><rect x="-6" y="-6" width="72" height="72" fill="#8b9068" stroke="#111" strokeWidth="2" /><path d="M30-6v72M8 8l44 44M52 8L8 52" stroke="#111" strokeWidth="3" /><path d="M3 3h10v10H3zM47 3h10v10H47zM3 47h10v10H3zM47 47h10v10H47z" fill="#111" /><circle cx="30" cy="30" r="15" fill="#fff" stroke="#111" strokeWidth="2" /><rect x="26" y="26" width="8" height="8" fill="#111" /></>],
  ["Steam", <><circle cx="30" cy="30" r="34" fill="url(#gs)" /><path d="M-3 29l17 7 15-7 4-12q4-9 12-8 10 2 9 12-2 10-13 10l-10 9q-1 9-9 10-8 0-10-9L0 38q-3-4-3-9z" fill="#dfe4ea" /><circle cx="42" cy="20" r="7" fill="#dfe4ea" stroke="#35507c" strokeWidth="2.500" /><path d="M15 44q5 4 9 0 3-5-2-8" fill="none" stroke="#35609a" strokeWidth="2.500" /></>],
  ["蓝云", <><R f="#6295f6" /><path d="M32 11q17 1 17 16-1 14-17 15V32q6 0 6-6t-6-5z" fill="#fff" /><path d="M12 28l7-4 4 13-8 4z" fill="#2a4fb4" /><path d="M12 44l14-23 8 5-15 22z" fill="#c3d7fc" opacity=".8" /></>],
  ["钉钉", <><R f="url(#gk)" /><path d="M19 7q26 14 26 26l-5 6h3L26 53l4-12h-5l2-3q-12-9-8-31z" fill="#fff" /></>],
  ["WPS", <><R f="#fff" /><path d="M8 17h18l-2 5h-5l5 13 8-18h19L38 46h-6l-3-9-4 9h-5z" fill="#e8402e" /><path d="M31 17h8l-9 18-3-7z" fill="#ee9438" /><path d="M38 22h6l-8 15-2-6z" fill="#fff" /></>],
  ["抖音", <><R f="#000" /><path d={note} fill="#25f4ee" transform="translate(-1.500 -1)" /><path d={note} fill="#fe2c55" transform="translate(2 1.500)" /><path d={note} fill="#fff" /></>],
  ["Photoshop", <><R f="#0a1e36" /><T y={41} s={32} f="#4aa8ff">Ps</T></>],
  ["Parallels", <Monitor />],
  ["Chrome", <><R f="#f6f6f6" /><Chrome /></>],
  ["SOLIDWORKS", <><path d="M30 0l30 11v36L30 60 0 46V11z" fill="#5b0f0f" /><path d="M30 0l30 11-30 11L0 11z" fill="#d23a34" /><path d="M30 22v38L0 46V11z" fill="#a92b2a" /><T x={14} y={45} s={31} f="#fff" w={700}>S</T><T x={45} y={38} s={23} f="#fff" w={700}>W</T><T x={45} y={60} s={13} f="#fff" w={700}>2016</T></>],
  ["Blender", <><R f="#333" /><path d="M28 11q3-2 5 0l14 16q8 6 8 13-2 10-16 11-13 0-17-13l-12 7q-4 1-5-2-1-3 2-5l17-11H12q-3-1-3-3t3-3h18l-5-6q0-3 3-4z" fill="#dd8732" /><circle cx="38" cy="33" r="10.500" fill="#fff" /><circle cx="38" cy="33" r="6.500" fill="#2c568a" /></>],
];
const running = [0, 1, 11, 22, 24, 25, 26, 27, 28, 29, 30, 31];
const Thumb = ({ label, children }) => <button aria-label={label} className="flex h-[60px] w-[77px] items-center justify-center"><svg className="h-[60px] w-[72px] overflow-visible" viewBox="0 0 72 60" aria-hidden="true">{children}</svg></button>;
const grads = [["gf", "#4fb5f5", "#2563e4"], ["gg", "#7bea74", "#4fbe46"], ["gm", "#356be8", "#5cc0f7"], ["gr", "#ec6478", "#e33b44"], ["gk", "#55aef8", "#2f62ee"], ["gp", "#b25ee6", "#6b2da8"], ["go", "#f5b24a", "#ef8d3a"], ["gs", "#131f4a", "#2f8fc0"]];
const Dock = () => (
  <footer className="relative flex h-[113px] shrink-0 justify-center pt-[7px]">
    <svg className="absolute size-0" aria-hidden="true"><defs>{grads.map(([id, a, b]) => <linearGradient key={id} id={id} x1="0" y1="0" x2="0" y2="1"><stop offset="0" stopColor={a} /><stop offset="1" stopColor={b} /></linearGradient>)}</defs></svg>
    <nav className="relative flex h-24 items-start rounded-[30px] border-2 border-[#8d9cae]/70 bg-gradient-to-r from-[#59647a] via-[#5b7690] to-[#657b84] px-0.5 pt-[13px]">
      {apps.map(([n, art, badge], i) => (
        <button key={n} aria-label={n} className="relative flex w-[77px] flex-col items-center">
          <svg className="size-[60px] overflow-visible" viewBox="0 0 60 60" aria-hidden="true">{art}</svg>
          {running.includes(i) && <span className="mt-2 size-2 rounded-full bg-black" />}
          {badge && <span className="absolute -top-2 right-0 flex size-7 items-center justify-center rounded-full bg-[#e6524a] text-base text-white">{badge}</span>}
        </button>
      ))}
      <span className="-mt-1 ml-[18px] mr-[18px] h-[72px] w-0.5 bg-[#3d5360]" />
      <Thumb label="窗口 1"><rect y="10" width="70" height="39" fill="#eceef1" /><rect y="10" width="70" height="4" fill="#d6dadf" /><path d="M0 16h10v32H0z" fill="#f8f8f8" /><rect x="26" y="20" width="28" height="23" fill="#d0d0d0" stroke="#a8a097" /><path d="M0 48h46" stroke="#22315c" strokeWidth="2" /><g transform="translate(45 38) scale(.42)"><Monitor /></g></Thumb>
      <Thumb label="窗口 2"><rect y="2" width="70" height="56" rx="1" fill="#f1f1f1" /><path d="M4 24h62v16H4z" fill="#fff" /><path d="M4 40h62v4H4z" fill="#d2d2d2" /><path d="M4 8h62M24 14h24M24 17h22M26 20h20M17 27h40M17 31h40M17 35h40M22 42h34" stroke="#8a8a8a" strokeWidth="1.500" strokeDasharray="5 2" /><path d="M26 48h18" stroke="#4b8ef0" strokeWidth="3" /><path d="M4 52h40" stroke="#9a9a9a" strokeWidth="1.500" strokeDasharray="5 4" /><path d="M4 56h22" stroke="#8fc48f" strokeWidth="2" /><path d="M2 4h6" stroke="#e26a5a" strokeWidth="2" /></Thumb>
      <Thumb label="窗口 3"><rect y="10" width="70" height="39" fill="#0d0e10" /><rect y="10" width="70" height="5" fill="#dfe3ee" /><path d="M0 20h44v24H0z" fill="#26262e" /><path d="M10 26h26" stroke="#57457a" strokeWidth="2" /><path d="M50 20h16M50 24h12M50 28h16" stroke="#666" strokeWidth="1" /><g transform="translate(46 38) scale(.37)"><R f="#fff" /><Chrome /></g></Thumb>
      <button aria-label="废纸篓" className="flex w-[77px] justify-center"><svg className="-mt-1 h-[70px] w-[54px]" viewBox="0 0 54 70" aria-hidden="true"><path d="M2 11l8-6 6 2 5-6 9 6 8-5 6 6 8 3-6 6H8z" fill="#e9e9e9" /><path d="M12 8l5 6M20 4l4 8M34 5l-4 8M40 7l4 6" stroke="#444" strokeWidth="3" /><path d="M20 10l5-3v5zM36 9l5 4h-6z" fill="#3c8ea8" /><path d="M1 12q26 9 52 0l-5 50q-1 6-8 6H14q-7 0-8-6z" fill="#dfdfdf" /><path d="M24 22q8 14-2 22M12 30q2 14 4 28M42 28q-4 12-4 24" stroke="#d0d0d0" strokeWidth="4" fill="none" /><path d="M1 12q26 9 52 0" fill="none" stroke="#f8f8f8" strokeWidth="2" /></svg></button>
    </nav>
  </footer>
);

export default function App() {
  return (
    <div className="relative flex h-screen w-full flex-col overflow-hidden bg-[#0d1c30] font-['Inter','Noto_Sans_CJK_SC',sans-serif]">
      <svg className="absolute bottom-0 left-0 h-40 w-full" aria-hidden="true">
        <defs>
          <filter id="sea" x="0" y="0" width="100%" height="100%"><feTurbulence type="fractalNoise" baseFrequency="0.09 0.16" numOctaves="3" seed="4" /><feColorMatrix values="0 0 0 0 .35  0 0 0 0 .58  0 0 0 0 .68  2.200 0 0 0 -1" /></filter>
          <linearGradient id="sg"><stop offset="0" stopColor="#0a1a35" /><stop offset="1" stopColor="#0c1c26" /></linearGradient>
          <linearGradient id="sm"><stop offset="0" stopColor="#333" /><stop offset=".6" stopColor="#888" /><stop offset="1" stopColor="#ddd" /></linearGradient>
          <mask id="seaMask"><rect width="100%" height="100%" fill="url(#sm)" /></mask>
        </defs>
        <rect width="100%" height="100%" fill="url(#sg)" />
        <rect width="100%" height="100%" filter="url(#sea)" mask="url(#seaMask)" />
      </svg>
      <MenuBar />
      <div className="relative h-0.5 shrink-0 bg-[#7fb2e2]" />
      <div className="relative flex min-h-0 flex-1 flex-col bg-gradient-to-b from-[#86b8e6] from-5% to-transparent to-5%">
        <div className="flex min-h-0 flex-1 flex-col overflow-hidden rounded-[20px] bg-[#181818] text-[22px] leading-8 tabular-nums">
          <div className="relative flex h-14 shrink-0 items-center border-b-2 border-black bg-[#e7e9e8] pl-4">
            <Lights />
            <h1 className="absolute inset-x-0 text-center text-[26px] font-bold text-[#9b9c9c]">* (Unsaved) - Blender 4.0</h1>
          </div>
          <div className="flex min-h-0 flex-1 flex-col [text-shadow:0_2px_2px_rgba(0,0,0,.45)]">
            <TopBar />
            <div className="flex min-h-0 flex-1 gap-2 pl-px pr-px">
              <div className="flex min-w-0 flex-1 flex-col gap-2"><Viewport /><Timeline /></div>
              <div className="flex w-[505px] shrink-0 flex-col gap-1.5"><Outliner /><Properties /></div>
            </div>
            <div className="flex h-[42px] shrink-0 items-center pl-[23px] pr-[22px] pt-1 text-[#8f8f8f]">
              <span className="flex w-[422px]"><Mouse b={0} /></span>
              <span className="flex w-[422px] items-center gap-5"><Mouse b={1} />平移视图</span>
              <Mouse b={2} />
              <span className="ml-auto">4.0.2</span>
            </div>
          </div>
        </div>
      </div>
      <Dock />
      <div className="tabular-nums"><FileDialog /></div>
    </div>
  );
}
